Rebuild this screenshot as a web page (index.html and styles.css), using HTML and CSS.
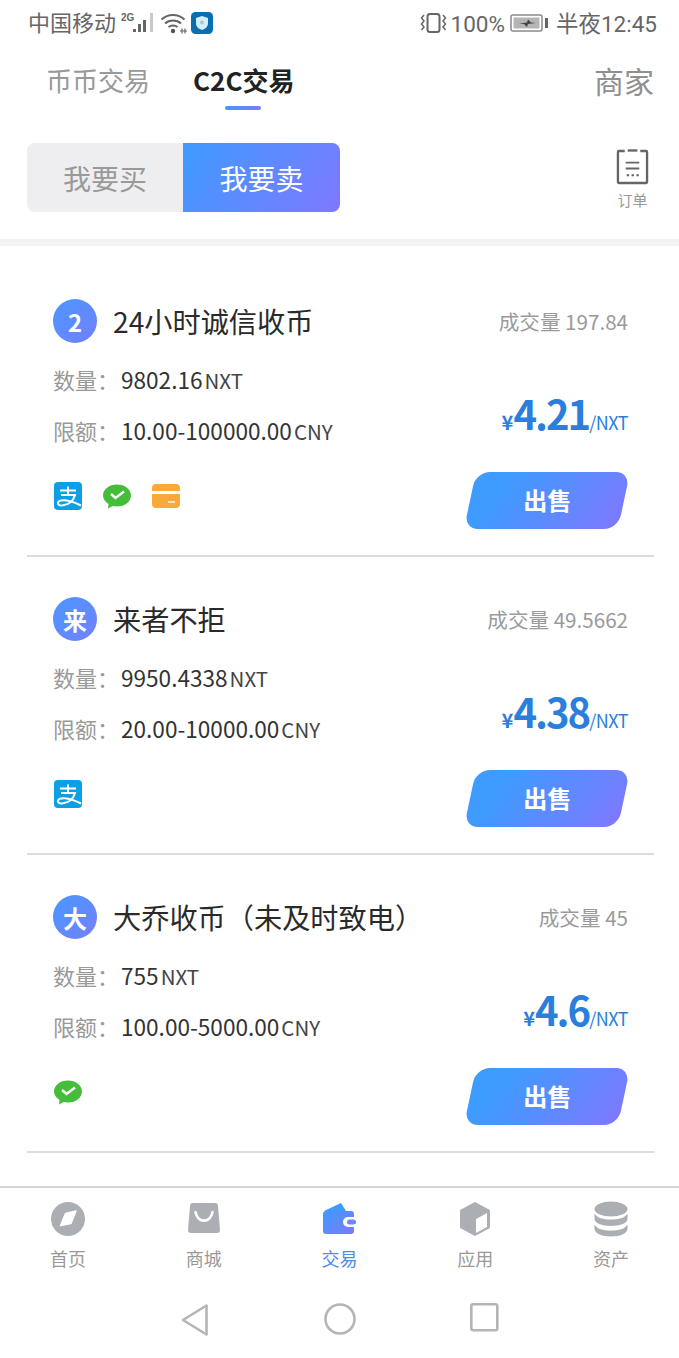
FILE: index.html
```html
<!DOCTYPE html>
<html lang="zh">
<head>
<meta charset="utf-8">
<title>C2C交易</title>
<link rel="stylesheet" href="styles.css">
</head>
<body>
<div class="page">
  <header class="status">
    <div class="status-side">
      <span class="carrier">中国移动</span>
      <svg class="sig" width="34" height="24" viewBox="0 0 34 24"><text x="0" y="10" class="sig-t">2G</text><rect x="12" y="18" width="3" height="3" fill="#666"/><rect x="17" y="13" width="3" height="8" fill="#666"/><rect x="22" y="9" width="3" height="12" fill="#666"/><rect x="29" y="2" width="3" height="19" fill="#c9c9c9"/></svg>
      <svg class="wifi" width="28" height="22" viewBox="0 0 28 22"><path d="M1.500 7.500C8 1.500 18 1.500 24.500 7.500M5 11.500C9.500 7.500 16.500 7.500 21 11.500M8.500 15C11 13 15 13 17.500 15" fill="none" stroke="#666" stroke-width="2"/><circle cx="13" cy="19" r="2.200" fill="#555"/><path d="M20 19h7M25 16.500v5M22 16.500v5" stroke="#666" stroke-width="1.200"/></svg>
      <svg class="shield" width="22" height="22" viewBox="0 0 22 22"><rect width="22" height="22" rx="4.500" fill="#0a6fb0"/><path d="M11 4l6 2v5c0 4-3 6-6 7-3-1-6-3-6-7V6z" fill="#d7eefb"/><circle cx="11" cy="10.500" r="2" fill="#9fcbe8"/></svg>
    </div>
    <div class="status-side">
      <svg class="vib" width="27" height="22" viewBox="0 0 27 22"><rect x="7.500" y="2" width="12" height="18" rx="2.500" fill="none" stroke="#666" stroke-width="2"/><path d="M4 3l-2.500 3 2.500 3-2.500 3 2.500 3-2.500 3M23 3l2.500 3-2.500 3 2.500 3-2.500 3 2.500 3" fill="none" stroke="#666" stroke-width="1.500"/></svg>
      <span class="pct">100%</span>
      <svg class="batt" width="38" height="20" viewBox="0 0 38 20"><rect x="1" y="2" width="31" height="16" rx="2" fill="#fff" stroke="#8a8a8a" stroke-width="1.500"/><rect x="3.500" y="4.500" width="26" height="11" fill="#b5b5b5"/><rect x="35" y="5" width="3" height="10" fill="#666"/><path d="M9 10.500l8-1 1-3 3 3 5 .5-8 1-1 3-3-3z" fill="#444"/></svg>
      <span class="time">半夜12:45</span>
    </div>
  </header>

  <nav class="top-tabs">
    <span class="tab">币币交易</span>
    <span class="tab tab-on">C2C交易</span>
    <span class="merchant">商家</span>
  </nav>

  <section class="tools">
    <div class="seg">
      <span class="seg-item">我要买</span>
      <span class="seg-item seg-on">我要卖</span>
    </div>
    <div class="orders">
      <svg width="33" height="37" viewBox="0 0 34 38"><path d="M9 3H3a1 1 0 0 0-1 1v31a1 1 0 0 0 1 1h28a1 1 0 0 0 1-1V4a1 1 0 0 0-1-1h-6" fill="none" stroke="#666" stroke-width="2.400"/><path d="M12 2.500h10" stroke="#666" stroke-width="2.400"/><path d="M10 15h14M10 21h14" stroke="#666" stroke-width="2"/><path d="M11 28h2.500M16 28h2.500M21 28h2.500" stroke="#666" stroke-width="2"/></svg>
      <span>订单</span>
    </div>
  </section>

  <main class="list">
    <article class="card">
      <div class="col-left">
        <div class="head"><span class="avatar">2</span><span class="name">24小时诚信收币</span></div>
        <p class="row row-qty"><span class="lbl">数量：</span><span class="val">9802.16</span><span class="unit">NXT</span></p>
        <p class="row row-lim"><span class="lbl">限额：</span><span class="val">10.00-100000.00</span><span class="unit">CNY</span></p>
        <div class="pay">
          <svg class="ico" width="28" height="28" viewBox="0 0 28 28"><rect width="28" height="28" rx="4" fill="#0b9fe6"/><path d="M6 8.500h16M14 4.500v8M7 13h14c-2 7-8 10-13 10.500-3 .2-4.500-1.500-4-3 1-3 9-4 23 3" fill="none" stroke="#fff" stroke-width="2"/></svg>
          <svg class="ico" width="28" height="28" viewBox="0 0 28 28"><path d="M14 2.500c7.700 0 14 4.800 14 11s-6.300 11-14 11c-1.500 0-3-.2-4.300-.5L5 26.500l.6-4.500C2.200 20 0 17 0 13.500c0-6.200 6.300-11 14-11z" fill="#45bd3b"/><path d="M8 12l4.500 4L21 9.500" fill="none" stroke="#fff" stroke-width="2.400"/></svg>
          <svg class="ico" width="28" height="24" viewBox="0 0 28 24"><path d="M0 4a4 4 0 0 1 4-4h20a4 4 0 0 1 4 4v3H0zM0 10h28v10a4 4 0 0 1-4 4H4a4 4 0 0 1-4-4z" fill="#f9a83a"/><rect x="16" y="17" width="7" height="2" fill="#fde4bd"/></svg>
        </div>
      </div>
      <div class="col-right">
        <span class="vol">成交量 197.84</span>
        <p class="price"><span class="yen">¥</span><span class="num">4.21</span><span class="per">/NXT</span></p>
        <button class="sell"><span>出售</span></button>
      </div>
    </article>

    <article class="card">
      <div class="col-left">
        <div class="head"><span class="avatar">来</span><span class="name">来者不拒</span></div>
        <p class="row row-qty"><span class="lbl">数量：</span><span class="val">9950.4338</span><span class="unit">NXT</span></p>
        <p class="row row-lim"><span class="lbl">限额：</span><span class="val">20.00-10000.00</span><span class="unit">CNY</span></p>
        <div class="pay">
          <svg class="ico" width="28" height="28" viewBox="0 0 28 28"><rect width="28" height="28" rx="4" fill="#0b9fe6"/><path d="M6 8.500h16M14 4.500v8M7 13h14c-2 7-8 10-13 10.500-3 .2-4.500-1.500-4-3 1-3 9-4 23 3" fill="none" stroke="#fff" stroke-width="2"/></svg>
        </div>
      </div>
      <div class="col-right">
        <span class="vol">成交量 49.5662</span>
        <p class="price"><span class="yen">¥</span><span class="num">4.38</span><span class="per">/NXT</span></p>
        <button class="sell"><span>出售</span></button>
      </div>
    </article>

    <article class="card">
      <div class="col-left">
        <div class="head"><span class="avatar">大</span><span class="name">大乔收币（未及时致电）</span></div>
        <p class="row row-qty"><span class="lbl">数量：</span><span class="val">755</span><span class="unit">NXT</span></p>
        <p class="row row-lim"><span class="lbl">限额：</span><span class="val">100.00-5000.00</span><span class="unit">CNY</span></p>
        <div class="pay">
          <svg class="ico" width="28" height="28" viewBox="0 0 28 28"><path d="M14 2.500c7.700 0 14 4.800 14 11s-6.300 11-14 11c-1.500 0-3-.2-4.300-.5L5 26.500l.6-4.500C2.200 20 0 17 0 13.500c0-6.200 6.300-11 14-11z" fill="#45bd3b"/><path d="M8 12l4.500 4L21 9.500" fill="none" stroke="#fff" stroke-width="2.400"/></svg>
        </div>
      </div>
      <div class="col-right">
        <span class="vol">成交量 45</span>
        <p class="price"><span class="yen">¥</span><span class="num">4.6</span><span class="per">/NXT</span></p>
        <button class="sell"><span>出售</span></button>
      </div>
    </article>
  </main>

  <footer class="bottom">
    <div class="nav-item">
      <svg width="36" height="36" viewBox="0 0 36 36"><circle cx="18" cy="18" r="17" fill="#abaeb3"/><path d="M10.500 24.500L15.500 12.500L26 10L21 22.500z" fill="#fff" stroke="#fff" stroke-width="1.500" stroke-linejoin="round"/></svg>
      <span>首页</span>
    </div>
    <div class="nav-item">
      <svg width="36" height="36" viewBox="0 0 36 36"><path d="M4 5a3 3 0 0 1 3-3h22a3 3 0 0 1 3 3l2 24a3 3 0 0 1-3 3H5a3 3 0 0 1-3-3z" fill="#abaeb3"/><path d="M9.500 11c2 11.500 15 11.500 17 0" fill="none" stroke="#fff" stroke-width="2.600" stroke-linecap="round"/></svg>
      <span>商城</span>
    </div>
    <div class="nav-item nav-on">
      <svg width="36" height="36" viewBox="0 0 36 36"><defs><linearGradient id="walletFill" x1="0" y1="0" x2="1" y2="1"><stop offset="0" stop-color="#3e9bff"/><stop offset="1" stop-color="#7f78ff"/></linearGradient></defs><path d="M3 10L20 2l5 8z" fill="#3e9bff"/><path d="M5 10h25a3 3 0 0 1 3 3v3h-6a5 5 0 0 0 0 10h6v4a3 3 0 0 1-3 3H5a3 3 0 0 1-3-3V13a3 3 0 0 1 3-3z" fill="url(#walletFill)"/><rect x="26" y="18.500" width="9" height="5" rx="2.500" fill="#6d85ff"/></svg>
      <span>交易</span>
    </div>
    <div class="nav-item">
      <svg width="36" height="36" viewBox="0 0 36 36"><path d="M18 1l14 7.500a2 2 0 0 1 1 1.700v15.600a2 2 0 0 1-1 1.700L18 35 4 27.500a2 2 0 0 1-1-1.700V10.200a2 2 0 0 1 1-1.700z" fill="#abaeb3"/><path d="M30 12v14l-11 6V18z" fill="#fff"/></svg>
      <span>应用</span>
    </div>
    <div class="nav-item">
      <svg width="36" height="36" viewBox="0 0 36 36"><ellipse cx="18" cy="8" rx="16.500" ry="7.500" fill="#abaeb3"/><path d="M1.500 12.500C4 17 10 18.500 18 18.500s14-1.500 16.500-6V18c0 4-7 7-16.500 7S1.500 22 1.500 18z" fill="#abaeb3"/><path d="M1.500 23.500C4 28 10 29.500 18 29.500s14-1.500 16.500-6V28c0 4-7 7.500-16.500 7.500S1.500 32 1.500 28z" fill="#abaeb3"/></svg>
      <span>资产</span>
    </div>
  </footer>

  <div class="sysnav">
    <svg width="30" height="34" viewBox="0 0 30 34"><path d="M26.500 2.500v29L3 17z" fill="none" stroke="#b5b5b5" stroke-width="2.600" stroke-linejoin="round"/></svg>
    <svg width="32" height="32" viewBox="0 0 32 32"><circle cx="16" cy="16" r="14.500" fill="none" stroke="#b5b5b5" stroke-width="2.600"/></svg>
    <svg width="30" height="30" viewBox="0 0 30 30"><rect x="1.300" y="1.300" width="26" height="26" rx="2" fill="none" stroke="#b5b5b5" stroke-width="2.600"/></svg>
  </div>
</div>
</body>
</html>
```

FILE: styles.css
```css
* { box-sizing: border-box; }
html, body { margin: 0; padding: 0; background: #fff; }
body { font-family: "Noto Sans CJK SC", "Noto Sans", sans-serif; color: #2a2a2a; }
p { margin: 0; }

.page { width: 679px; height: 1358px; display: flex; flex-direction: column; overflow: hidden; }

.status { height: 46px; padding: 0 22px 0 28px; display: flex; justify-content: space-between; align-items: center; font-size: 22px; color: #666; }
.status-side { display: flex; align-items: center; line-height: 46px; }
.carrier { padding-bottom: 4px; }
.sig { margin-left: 5px; }
.sig-t { font-size: 10px; font-weight: 700; fill: #666; font-family: "Liberation Sans", sans-serif; }
.wifi { margin-left: 5px; }
.shield { margin-left: 3px; }
.vib { margin-right: 4px; }
.pct { font-family: Roboto, sans-serif; font-size: 22.500px; padding-top: 2px; }
.batt { margin: 0 8px 0 5px; }
.time { font-family: Roboto, "Noto Sans CJK SC", sans-serif; font-size: 22.500px; padding-top: 2px; }

.top-tabs { height: 72px; padding: 0 25px 0 46px; display: flex; align-items: flex-start; }
.tab { font-size: 26px; line-height: 68px; height: 72px; color: #999; margin-right: 43px; }
.tab-on { color: #222; font-weight: 700; position: relative; }
.tab-on::after { content: ""; position: absolute; left: 32px; bottom: 8px; width: 36px; height: 4px; border-radius: 2px; background: linear-gradient(90deg, #3e9bff, #7f78ff); }
.merchant { margin-left: auto; font-size: 30px; line-height: 68px; color: #8f8f8f; }

.tools { padding: 25px 30px 0 27px; height: 128px; display: flex; justify-content: space-between; align-items: flex-start; border-bottom: 7px solid #f3f3f5; }
.seg { display: flex; width: 313px; height: 69px; border-radius: 8px; overflow: hidden; }
.seg-item { flex: 0 0 156px; display: flex; align-items: center; justify-content: center; font-size: 28px; background: #eeeef0; color: #999; }
.seg-on { flex: 0 0 157px; color: #fff; background: linear-gradient(125deg, #3e9bff, #7f78ff); }
.orders { width: 33px; display: flex; flex-direction: column; align-items: center; margin-top: 5px; color: #999; font-size: 15px; line-height: 20px; }
.orders svg { display: block; margin-bottom: 5px; }
.orders span { white-space: nowrap; }

.list { flex: 1; padding-top: 13px; }
.card { height: 298px; margin: 0 25px 0 27px; padding: 40px 26px 0 26px; display: flex; justify-content: space-between; border-bottom: 2px solid #dcdcdc; }
.col-left { display: flex; flex-direction: column; }
.head { display: flex; align-items: center; height: 44px; }
.avatar { width: 44px; height: 44px; border-radius: 50%; background: linear-gradient(135deg, #4a97ff, #7480ff); color: #fff; font-size: 24px; font-weight: 700; display: flex; align-items: center; justify-content: center; }
.name { margin-left: 16px; padding-bottom: 2px; font-size: 28.200px; color: #2a2a2a; white-space: nowrap; }
.row { display: flex; align-items: baseline; height: 34px; line-height: 34px; white-space: nowrap; }
.row-qty { margin-top: 19px; }
.row-lim { margin-top: 17px; }
.lbl { width: 68px; font-size: 22px; color: #999; }
.val { font-size: 22.600px; color: #333; }
.unit { font-size: 20.500px; color: #444; margin-left: 2px; }
.pay { display: flex; align-items: center; gap: 21px; margin-top: 35px; margin-left: 1px; height: 28px; }
.ico { display: block; flex: none; }

.col-right { display: flex; flex-direction: column; align-items: flex-end; }
.vol { font-size: 20.600px; line-height: 44px; color: #9a9a9a; white-space: nowrap; }
.price { display: flex; align-items: baseline; margin-top: 42px; height: 56px; line-height: 56px; color: #2a7fdc; white-space: nowrap; }
.yen { font-size: 20px; font-weight: 700; }
.num { font-size: 40px; font-weight: 700; letter-spacing: -2px; }
.per { font-size: 18px; letter-spacing: -0.500px; }
.sell { width: 154px; height: 57px; margin-top: 31px; margin-right: 4px; padding: 0 0 2px; border: 0; border-radius: 14px; background: linear-gradient(120deg, #3e9bff 20%, #7f78ff 100%); color: #fff; font: 700 24px "Noto Sans CJK SC", sans-serif; transform: skewX(-12deg); }
.sell span { display: block; transform: skewX(12deg); }

.bottom { height: 99px; padding: 13px 0 0; display: flex; border-top: 2px solid #d6d6d6; }
.nav-item { flex: 1; display: flex; flex-direction: column; align-items: center; font-size: 18px; line-height: 26px; color: #999; }
.nav-item svg { display: block; margin-bottom: 8px; }
.nav-on { color: #4b8ee6; }

.sysnav { height: 73px; display: flex; align-items: flex-start; justify-content: center; gap: 114px; padding-top: 18px; }
```
